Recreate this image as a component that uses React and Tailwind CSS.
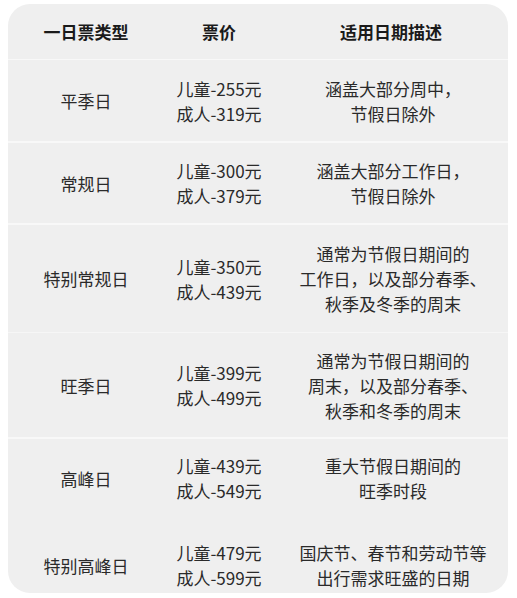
const rows = [
  {
    name: "平季日",
    child: "255",
    adult: "319",
    desc: ["涵盖大部分周中，", "节假日除外"],
    h: "h-[82px]",
    line: "border-t border-[#f8f8f8]",
  },
  {
    name: "常规日",
    child: "300",
    adult: "379",
    desc: ["涵盖大部分工作日，", "节假日除外"],
    h: "h-[82px]",
    line: "border-t-2 border-[#f8f8f8]",
  },
  {
    name: "特别常规日",
    child: "350",
    adult: "439",
    desc: ["通常为节假日期间的", "工作日，以及部分春季、", "秋季及冬季的周末"],
    h: "h-[109px]",
    line: "border-t-2 border-[#f8f8f8]",
  },
  {
    name: "旺季日",
    child: "399",
    adult: "499",
    desc: ["通常为节假日期间的", "周末，以及部分春季、", "秋季和冬季的周末"],
    h: "h-[105px]",
    line: "border-t border-[#f6f6f6]",
  },
  {
    name: "高峰日",
    child: "439",
    adult: "549",
    desc: ["重大节假日期间的", "旺季时段"],
    h: "h-[80px]",
    line: "border-t-2 border-[#f8f8f8]",
  },
  {
    name: "特别高峰日",
    child: "479",
    adult: "599",
    desc: ["国庆节、春节和劳动节等", "出行需求旺盛的日期"],
    h: "h-[76px] pt-5",
    line: "",
  },
];

export default function App() {
  return (
    <main
      className="min-h-screen bg-white px-[8px] pt-[4px]"
      style={{ fontFamily: '"Noto Sans CJK SC", "Noto Sans", sans-serif' }}
    >
      <div className="w-[500px] rounded-[22px] bg-[#efefef] overflow-hidden text-[#2a2a2a]">
        {/* Header */}
        <div className="grid grid-cols-[156px_110px_1fr] h-[55px] items-center text-[17px] font-bold text-[#1a1a1a]">
          <div className="text-center">一日票类型</div>
          <div className="text-center">票价</div>
          <div className="text-center">适用日期描述</div>
        </div>

        {rows.map((r) => (
          <div
            key={r.name}
            className={`grid grid-cols-[156px_110px_1fr] items-center text-[17px] leading-[25px] ${r.h} ${r.line}`}
          >
            <div className="text-center">{r.name}</div>
            <div className="text-center">
              <div>儿童-{r.child}元</div>
              <div>成人-{r.adult}元</div>
            </div>
            <div className="text-center pl-1">
              {r.desc.map((d) => (
                <div key={d}>{d}</div>
              ))}
            </div>
          </div>
        ))}
      </div>
    </main>
  );
}
